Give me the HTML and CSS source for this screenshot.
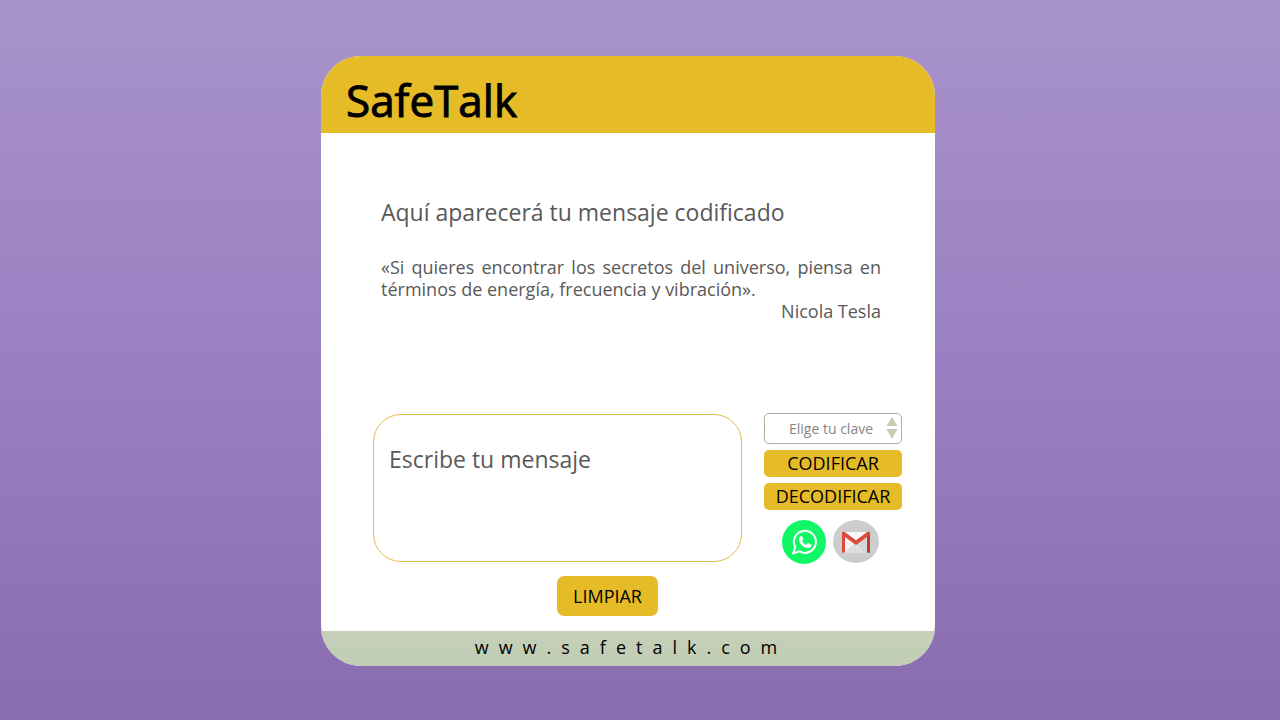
FILE: index.html
```html
<!DOCTYPE html>
<html lang="es">
<head>
  <meta charset="utf-8">
  <meta name="viewport" content="width=device-width, initial-scale=1">
  <title>SafeTalk</title>
  <link rel="stylesheet" href="styles.css">
</head>
<body>
  <main class="card">
    <header class="card-header">
      <h1 class="brand">SafeTalk</h1>
    </header>

    <section class="result">
      <h2 class="result-title">Aquí aparecerá tu mensaje codificado</h2>
      <blockquote class="quote">
        <p class="quote-text">«Si quieres encontrar los secretos del universo, piensa en términos de energía, frecuencia y vibración».</p>
        <p class="quote-author">Nicola Tesla</p>
      </blockquote>
    </section>

    <form class="form">
      <div class="compose">
        <textarea class="message" aria-label="Escribe tu mensaje" placeholder="Escribe tu mensaje"></textarea>
        <button class="button button-clear" type="reset">LIMPIAR</button>
      </div>
      <div class="actions">
        <div class="key-field">
          <select class="key-select" aria-label="Elige tu clave">
            <option>Elige tu clave</option>
            <option>1</option>
            <option>2</option>
            <option>3</option>
          </select>
          <svg class="key-arrows" viewBox="0 0 12 22" aria-hidden="true">
            <path d="M6 0 11.500 9H.5zM6 22 .5 12h11z" fill="#c3cdb4"/>
          </svg>
        </div>
        <button class="button" type="button">CODIFICAR</button>
        <button class="button" type="button">DECODIFICAR</button>
        <div class="share">
          <a class="share-link" href="#whatsapp" aria-label="WhatsApp">
            <svg class="share-icon" viewBox="0 0 44 44" aria-hidden="true">
              <circle cx="22" cy="22" r="22" fill="#12f765"/>
              <path d="M11.300 33.200 13.200 27A11 11 0 1 1 17.500 31.400Z" fill="none" stroke="#fff" stroke-width="2"/>
              <path d="M18.700 16.200c.5-.4 1.200-.4 1.500.3l1 2.300c.2.500 0 .8-.3 1.200l-.8 1c.9 1.800 2.300 3.200 4.300 4l1.200-1.400c.3-.4.700-.4 1.100-.2l2.300 1.100c.6.300.6.700.5 1.200-.4 1.600-1.700 2.500-3.500 2.400-4.700-.5-8.900-4.300-9.100-8.600 0-1.400.8-2.600 1.800-3.300z" fill="#fff"/>
            </svg>
          </a>
          <a class="share-link" href="#gmail" aria-label="Gmail">
            <svg class="share-icon share-icon-mail" viewBox="0 0 46 43" aria-hidden="true">
              <ellipse cx="23" cy="21.500" rx="23" ry="21.500" fill="#cdcdcd"/>
              <path d="M11 12h24v20.500H11z" fill="#f1f1f1"/>
              <path d="M12 32.500 23 22l11.500 10.500z" fill="#dedede"/>
              <path d="M23 23 34 14v18.500h-2z" fill="#d5d5d5"/>
              <path d="M10.500 12h25L23 22z" fill="#fafafa"/>
              <path d="M9 32.500V13q0-1.500 2-1.500L23 20.300 35 11.500q2 0 2 1.500v19.500h-3V17L23 25 12 17v15.500z" fill="#d94a3d"/>
              <path d="M34 17l3-3v18.500h-3z" fill="#bd3a31"/>
            </svg>
          </a>
        </div>
      </div>
    </form>

    <footer class="card-footer">
      <a class="site-link" href="#">www.safetalk.com</a>
    </footer>
  </main>
</body>
</html>
```
FILE: styles.css
```css
* {
  box-sizing: border-box;
}

body {
  margin: 0;
  min-height: 100vh;
  padding: 56px 24px 54px 0;
  display: flex;
  justify-content: center;
  align-items: flex-start;
  background: linear-gradient(#a893ca, #9a80c2 50%, #896dae);
  font-family: "Open Sans", "Noto Sans", sans-serif;
  color: #595959;
}

h1,
h2,
p,
blockquote {
  margin: 0;
  font-weight: 400;
}

.card {
  width: 100%;
  max-width: 614px;
  background: #fff;
  border-radius: 40px;
  overflow: hidden;
}

.card-header {
  padding: 14px 25px 3px;
  background: #e5bc28;
}

.brand {
  font-size: 44px;
  line-height: 60px;
  color: #000;
  -webkit-text-stroke: 1px #000;
}

.result {
  padding: 63px 54px 0 60px;
}

.result-title {
  font-size: 23px;
  line-height: 32px;
}

.quote {
  margin-top: 28px;
  font-size: 18px;
  line-height: 22px;
}

.quote-text {
  text-align: justify;
}

.quote-author {
  text-align: right;
}

.form {
  display: flex;
  gap: 22px;
  padding: 91px 33px 15px 52px;
}

.compose {
  flex: 1;
  display: flex;
  flex-direction: column;
  align-items: flex-end;
  gap: 14px;
  padding-top: 1px;
}

.message {
  display: block;
  width: 100%;
  height: 148px;
  padding: 28px 15px;
  border: 1px solid #e0bd48;
  border-radius: 28px;
  background: #fff;
  color: #595959;
  font: 23px/32px "Open Sans", "Noto Sans", sans-serif;
  resize: none;
}

.message::placeholder {
  color: #595959;
  opacity: 1;
}

.actions {
  width: 138px;
  display: flex;
  flex-direction: column;
  gap: 6px;
}

.key-field {
  position: relative;
}

.key-select {
  display: block;
  width: 100%;
  height: 31px;
  padding: 0 26px 0 24px;
  border: 1px solid #aab39c;
  border-radius: 5px;
  appearance: none;
  background: #fff;
  color: #858585;
  font: 14px/20px "Open Sans", "Noto Sans", sans-serif;
}

.key-arrows {
  position: absolute;
  top: 4px;
  right: 4px;
  width: 12px;
  height: 22px;
  pointer-events: none;
}

.button {
  height: 27px;
  padding: 0 0 1px;
  border: 0;
  border-radius: 5px;
  background: #e5bc28;
  color: #000;
  font: 18px/24px "Open Sans", "Noto Sans", sans-serif;
}

.button-clear {
  width: 101px;
  height: 40px;
  margin-right: 84px;
  padding: 0;
  border-radius: 7px;
}

.share {
  display: flex;
  gap: 7px;
  padding: 4px 0 0 18px;
}

.share-link,
.share-icon {
  display: block;
}

.share-icon {
  width: 44px;
  height: 44px;
}

.share-icon-mail {
  width: 46px;
  height: 43px;
}

.card-footer {
  padding: 4px 0 7px 6px;
  background: linear-gradient(#c6d0b9, #c0ccb3);
  text-align: center;
}

.site-link {
  display: block;
  color: #000;
  font-size: 18px;
  line-height: 24px;
  letter-spacing: 10px;
  text-decoration: none;
}
```
